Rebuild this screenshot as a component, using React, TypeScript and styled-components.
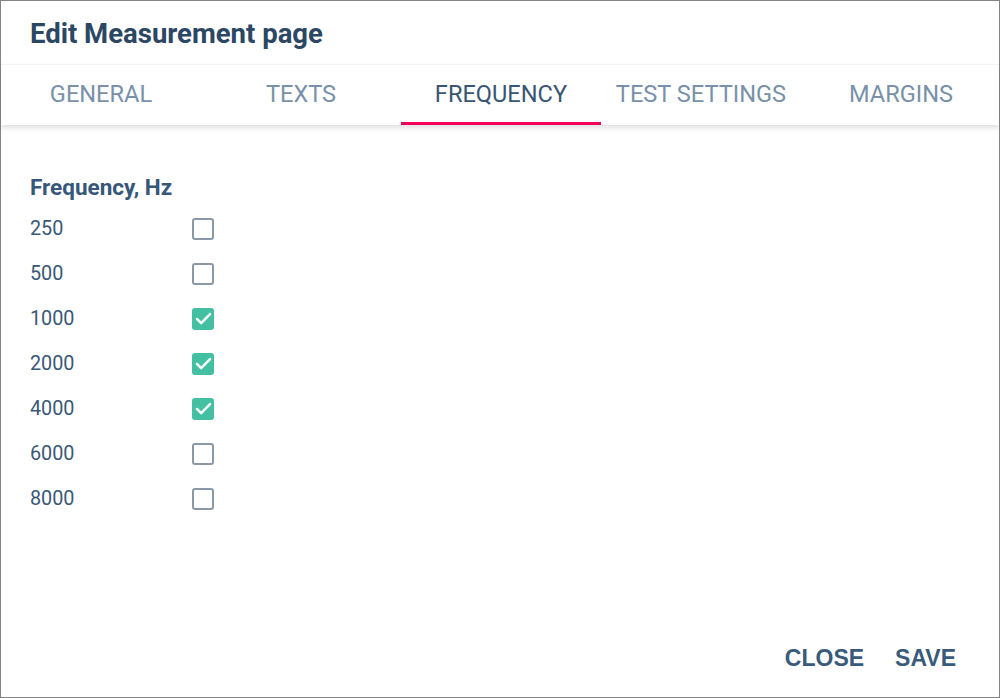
import React, { useState } from 'react';
import styled, { createGlobalStyle } from 'styled-components';

const GlobalStyle = createGlobalStyle`
  html, body {
    margin: 0;
    padding: 0;
    background: #ffffff;
  }
  * {
    box-sizing: border-box;
  }
`;

const Dialog = styled.div`
  display: flex;
  flex-direction: column;
  width: 1000px;
  height: 698px;
  border: 1px solid #858585;
  background: #ffffff;
  font-family: Roboto, 'Noto Sans', sans-serif;
`;

const Title = styled.h2`
  margin: 0;
  padding: 16px 29px 0;
  height: 63px;
  font-size: 27.5px;
  font-weight: 700;
  color: #2b4763;
  letter-spacing: 0;
`;

const TabBar = styled.div`
  display: flex;
  height: 61px;
  border-top: 1px solid #f3f3f3;
  box-shadow: 0 3px 5px rgba(0, 0, 0, 0.12);
  position: relative;
  z-index: 1;
`;

const Tab = styled.button<{ $active?: boolean }>`
  flex: 0 0 200px;
  position: relative;
  padding: 0 0 2px;
  border: 0;
  background: transparent;
  font-family: Roboto, 'Noto Sans', sans-serif;
  font-size: 23.6px;
  font-weight: 400;
  text-transform: uppercase;
  color: ${(p) => (p.$active ? '#385673' : '#7891a8')};
  cursor: pointer;

  &::after {
    content: '';
    display: ${(p) => (p.$active ? 'block' : 'none')};
    position: absolute;
    left: 0;
    right: 0;
    bottom: 0;
    height: 3px;
    background: #f50057;
  }
`;

const Content = styled.div`
  flex: 1;
  padding: 49px 29px 0;
`;

const SectionTitle = styled.div`
  font-size: 22.5px;
  font-weight: 700;
  color: #36577a;
  margin-bottom: 6px;
`;

const Row = styled.label`
  display: flex;
  align-items: center;
  height: 45px;
  cursor: pointer;
`;

const RowLabel = styled.span`
  width: 162px;
  font-size: 19.8px;
  color: #3a5877;
`;

const Box = styled.span<{ $checked: boolean }>`
  display: flex;
  align-items: center;
  justify-content: center;
  width: 22px;
  height: 22px;
  border-radius: 3px;
  border: ${(p) => (p.$checked ? 'none' : '2px solid #8a99a6')};
  background: ${(p) => (p.$checked ? '#43c0a2' : '#ffffff')};
`;

const HiddenInput = styled.input`
  display: none;
`;

const Footer = styled.div`
  display: flex;
  justify-content: flex-end;
  gap: 15px;
  padding: 0 35px 21px;
`;

const TextButton = styled.button`
  border: 0;
  background: transparent;
  padding: 4px 8px;
  font-family: 'Liberation Sans', Arial, sans-serif;
  font-size: 23px;
  font-weight: 700;
  color: #395a7b;
  cursor: pointer;
`;

const tabs = ['General', 'Texts', 'Frequency', 'Test settings', 'Margins'];

const initial: [number, boolean][] = [
  [250, false],
  [500, false],
  [1000, true],
  [2000, true],
  [4000, true],
  [6000, false],
  [8000, false],
];

const Check = () => (
  <svg width="21" height="21" viewBox="0 0 24 24" fill="none">
    <path d="M4.5 12.5l4.8 4.8L19.5 7" stroke="#ffffff" strokeWidth="2.8" strokeLinecap="round" strokeLinejoin="round" />
  </svg>
);

export default function App() {
  const [active, setActive] = useState(2);
  const [freqs, setFreqs] = useState(initial);

  const toggle = (i: number) =>
    setFreqs((f) => f.map((x, j) => (j === i ? [x[0], !x[1]] : x)) as [number, boolean][]);

  return (
    <>
      <GlobalStyle />
      <Dialog>
        <Title>Edit Measurement page</Title>
        <TabBar>
          {tabs.map((t, i) => (
            <Tab key={t} $active={i === active} onClick={() => setActive(i)}>
              {t}
            </Tab>
          ))}
        </TabBar>
        <Content>
          <SectionTitle>Frequency, Hz</SectionTitle>
          {freqs.map(([hz, on], i) => (
            <Row key={hz}>
              <RowLabel>{hz}</RowLabel>
              <HiddenInput type="checkbox" checked={on} onChange={() => toggle(i)} />
              <Box $checked={on}>{on && <Check />}</Box>
            </Row>
          ))}
        </Content>
        <Footer>
          <TextButton>CLOSE</TextButton>
          <TextButton>SAVE</TextButton>
        </Footer>
      </Dialog>
    </>
  );
}
